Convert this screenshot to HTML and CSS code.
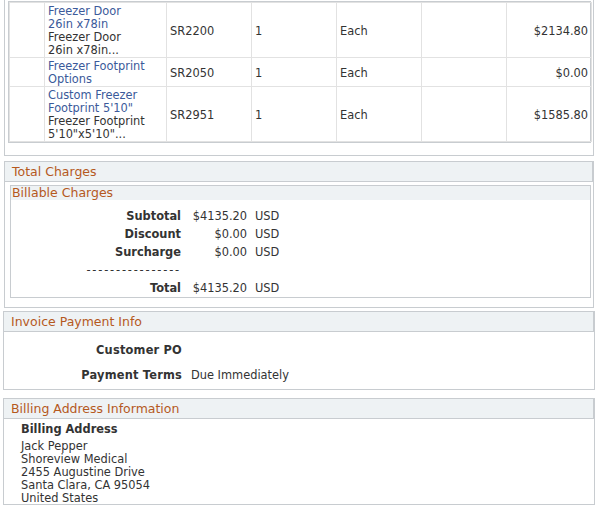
FILE: index.html
```html
<!DOCTYPE html>
<html lang="en">
<head>
<meta charset="utf-8">
<title>Invoice Detail</title>
<link rel="stylesheet" href="styles.css">
</head>
<body>
<div class="box box-lines">
  <div class="grid-wrap">
    <table class="lines">
      <colgroup>
        <col class="c-sel"><col class="c-desc"><col class="c-std"><col class="c-std"><col class="c-std"><col class="c-std"><col class="c-std">
      </colgroup>
      <tbody>
        <tr>
          <td></td>
          <td><div class="desc"><a class="item-link" href="#">Freezer Door 26in x78in</a><div>Freezer Door 26in x78in...</div></div></td>
          <td>SR2200</td>
          <td>1</td>
          <td>Each</td>
          <td></td>
          <td class="num">$2134.80</td>
        </tr>
        <tr>
          <td></td>
          <td><div class="desc"><a class="item-link" href="#">Freezer Footprint Options</a></div></td>
          <td>SR2050</td>
          <td>1</td>
          <td>Each</td>
          <td></td>
          <td class="num">$0.00</td>
        </tr>
        <tr>
          <td></td>
          <td><div class="desc"><a class="item-link" href="#">Custom Freezer Footprint 5'10"</a><div>Freezer Footprint 5'10"x5'10"...</div></div></td>
          <td>SR2951</td>
          <td>1</td>
          <td>Each</td>
          <td></td>
          <td class="num">$1585.80</td>
        </tr>
      </tbody>
    </table>
  </div>
</div>

<div class="box box-totals">
  <div class="section-head">Total Charges</div>
  <div class="totals-body">
    <div class="inner-box">
      <div class="inner-head">Billable Charges</div>
      <div class="charges">
        <div class="lbl">Subtotal</div><div class="amt">$4135.20</div><div class="cur">USD</div>
        <div class="lbl">Discount</div><div class="amt">$0.00</div><div class="cur">USD</div>
        <div class="lbl">Surcharge</div><div class="amt">$0.00</div><div class="cur">USD</div>
        <div class="dashes">----------------</div><div class="amt"></div><div class="cur"></div>
        <div class="lbl">Total</div><div class="amt">$4135.20</div><div class="cur">USD</div>
      </div>
    </div>
  </div>
</div>

<div class="box box-wide box-payment">
  <div class="section-head">Invoice Payment Info</div>
  <div class="payment">
    <div class="lbl">Customer PO</div><div class="val"></div>
    <div class="lbl">Payment Terms</div><div class="val">Due Immediately</div>
  </div>
</div>

<div class="box box-wide box-billing">
  <div class="section-head">Billing Address Information</div>
  <div class="billing">
    <div class="billing-label">Billing Address</div>
    <div class="address">
      <div>Jack Pepper</div>
      <div>Shoreview Medical</div>
      <div>2455 Augustine Drive</div>
      <div>Santa Clara, CA 95054</div>
      <div>United States</div>
    </div>
  </div>
</div>
</body>
</html>
```

FILE: styles.css
```css
html, body {
  margin: 0;
  padding: 0;
  background: #ffffff;
}

body {
  font-family: "DejaVu Sans", Verdana, sans-serif;
  font-size: 11.4px;
  color: #333333;
}

.box {
  box-sizing: border-box;
  margin-left: 4px;
  width: 590px;
  border: 1px solid #c8ccd0;
}

.box-wide {
  margin-left: 3px;
  width: 592px;
}

/* ---------- line items ---------- */
.box-lines {
  margin-top: -11px;
  padding: 11px 2px 12px 3px;
}

.grid-wrap {
  border: 1px solid #c8ccd0;
}

.lines {
  border-collapse: collapse;
  table-layout: fixed;
  width: 581px;
}

.c-sel { width: 35px; }
.c-desc { width: 122px; }
.c-std { width: 85px; }

.lines td {
  border: 1px solid #e2e2e2;
  padding: 2px 3px 0 3px;
  line-height: 13px;
  vertical-align: middle;
  white-space: normal;
}

.lines td.num {
  text-align: right;
}

.desc {
  width: 100px;
}

.item-link {
  display: block;
  color: #3b5a9a;
  text-decoration: none;
}

/* ---------- section headers ---------- */
.section-head {
  background: #eef2f4;
  border-bottom: 1px solid #c8ccd0;
  box-shadow: inset -1px 0 0 #c8ccd0;
  color: #b5591e;
  font-size: 12.5px;
  line-height: 19px;
  padding-left: 7px;
}

/* ---------- totals ---------- */
.box-totals {
  margin-top: 5px;
}

.totals-body {
  padding: 3px 2px 9px 5px;
}

.inner-box {
  border: 1px solid #c8ccd0;
}

.inner-head {
  background: #eef2f4;
  color: #b5591e;
  font-size: 12.5px;
  line-height: 14px;
  padding-left: 1px;
}

.charges {
  display: grid;
  grid-template-columns: 170px 66px auto;
  grid-auto-rows: 18px;
  line-height: 18px;
  padding-top: 7px;
}

.charges .lbl {
  font-weight: bold;
  text-align: right;
}

.charges .amt {
  text-align: right;
}

.charges .cur {
  padding-left: 8px;
}

.dashes {
  text-align: right;
  letter-spacing: 1.8px;
}

/* ---------- payment info ---------- */
.box-payment {
  margin-top: 3px;
}

.payment {
  display: grid;
  grid-template-columns: 178px auto;
  column-gap: 9px;
  row-gap: 7px;
  grid-auto-rows: 18px;
  line-height: 18px;
  padding: 9px 0 5px 0;
}

.payment .lbl {
  font-weight: bold;
  text-align: right;
  letter-spacing: 0.2px;
}

/* ---------- billing address ---------- */
.box-billing {
  margin-top: 8px;
}

.billing {
  padding: 4px 0 0 17px;
  line-height: 13px;
}

.billing-label {
  font-weight: bold;
  margin-bottom: 4px;
}

.address {
  margin-bottom: -1px;
}
```
